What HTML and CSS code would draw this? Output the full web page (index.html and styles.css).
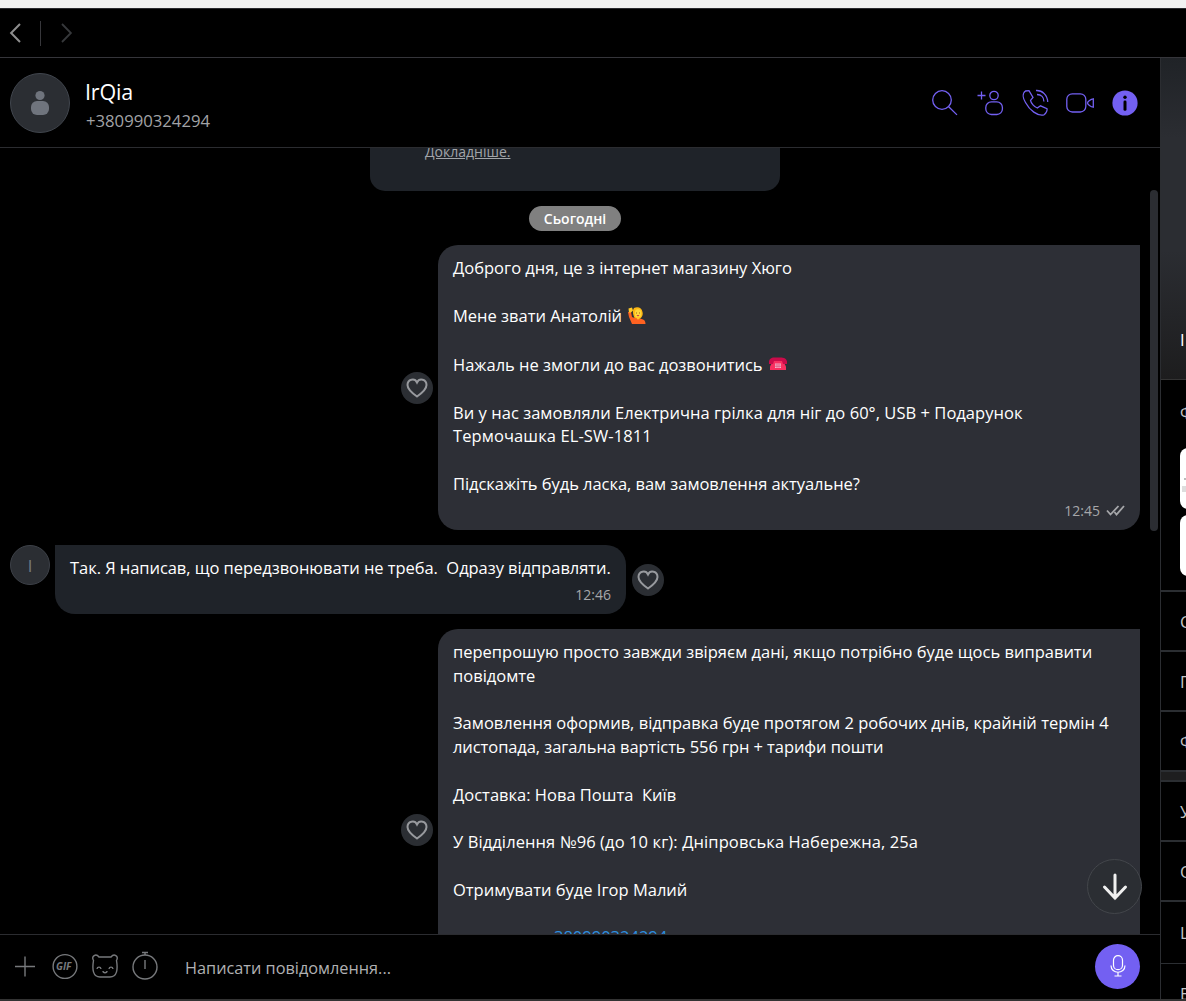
FILE: index.html
```
<!DOCTYPE html>
<html lang="uk">
<head>
    <meta charset="UTF-8">
    <meta name="viewport" content="width=device-width, initial-scale=1.0">
    <title>IrQia</title>
    <link rel="stylesheet" href="styles.css">
</head>
<body>

    <div class="titlebar"></div>

    <div class="nav-bar">
        <svg class="nav-back" width="12" height="20" viewBox="0 0 12 20"><path d="M11 1 2.1 10l8.9 9"/></svg>
        <div class="nav-divider"></div>
        <svg class="nav-forward" width="12" height="20" viewBox="0 0 12 20"><path d="M1 1l8.9 9L1 19"/></svg>
    </div>

    <div class="app">
        <div class="chat">
            <!-- Chat header -->
            <div class="chat-header">
                <div class="avatar">
                    <svg width="20" height="26" viewBox="0 0 20 26"><circle cx="10" cy="5.5" r="4.6"/><rect x="1" y="11" width="18" height="14" rx="6"/></svg>
                </div>
                <div class="contact">
                    <div class="contact-name">IrQia</div>
                    <div class="contact-phone">+380990324294</div>
                </div>
                <svg class="header-icons" width="208" height="30" viewBox="0 0 208 30">
                    <!-- search -->
                    <circle cx="12" cy="12" r="9.3"/>
                    <path d="M18.7 18.7l8.3 8.2"/>
                    <!-- add contact -->
                    <path d="M47.5 7.5h8M51.5 3.5v8"/>
                    <circle cx="64" cy="7.5" r="4.2"/>
                    <rect x="55.8" y="13.8" width="16.6" height="12.7" rx="5.6"/>
                    <!-- call -->
                    <path d="M95.5 3l3.500-.4 4 6.800-2.500 3c.6 3 3.700 6.500 6.800 7.600l3.200-2.200 6.500 2.900c.5 1.500-.8 4.700-3 6.100-6.500 1.600-14.500-4.700-18.500-12.300C93 10.500 92 5.500 95.500 3z"/>
                    <path d="M106 2.500c6.500-.4 11.500 4.800 11.700 11.500M107 6.500c4.200 0 6.900 3 6.900 7"/>
                    <!-- video -->
                    <rect x="136.8" y="5.8" width="19" height="18.2" rx="5.5"/>
                    <path d="M163.300 10.800v8.400c-2.500-.2-5.800-3-5.800-4.200s3.300-4 5.800-4.200z"/>
                    <!-- info -->
                    <circle class="info-disc" cx="195" cy="15" r="12.6"/>
                    <circle class="info-mark" cx="195" cy="9.3" r="1.7"/>
                    <rect class="info-mark" x="193.5" y="12.6" width="3" height="10.2" rx="1.3"/>
                </svg>
            </div>

            <!-- Messages -->
            <div class="messages">
                <div class="notice"><span class="notice-link">Докладніше.</span></div>
                <div class="date-pill">Сьогодні</div>

                <div class="row row-out">
                    <div class="like"><svg width="22" height="20" viewBox="0 0 22 20"><path d="M11 18.500C6 15 1.500 11.500 1.500 7c0-5.500 7-7.500 9.500-2.500C13.500-.5 20.500 1.500 20.500 7c0 4.500-4.500 8-9.500 11.500z"/></svg></div>
                    <div class="bubble bubble-out">
                        <div class="line"><span>Доброго дня, це з інтернет магазину Хюго</span></div>
                        <div class="line"></div>
                        <div class="line line-emoji"><span>Мене звати Анатолій</span>
                            <svg class="emoji" width="18" height="17" viewBox="0 0 18 17">
                                <path fill="#fdb813" d="M6 1c4-2 8 0 8.500 4 .8 3-.5 5-2.500 7H7C5 8 4 4 6 1z"/>
                                <ellipse cx="10" cy="6.5" rx="3.3" ry="4.3" fill="#ffd83a"/>
                                <path fill="#ff6221" d="M0 5h3l1 5c3 2 10 1 12 3 1 1 1.500 2.500 1.500 4H4L1 10z"/>
                                <path fill="#ffc928" d="M.5 1.500L4 .5l1 3-2 2H1zM8 10h4l-2 3z"/>
                                <path stroke="#8b4b16" stroke-width=".8" d="M8 6h1M11 6h1"/>
                                <path fill="#d33545" d="M8.500 8h3L10 9.500z"/>
                            </svg>
                        </div>
                        <div class="line"></div>
                        <div class="line line-emoji"><span>Нажаль не змогли до вас дозвонитись</span>
                            <svg class="emoji" width="18" height="14" viewBox="0 0 18 14">
                                <path fill="#f92f60" d="M4 4h10l3 5.500V13H1V9.500z"/>
                                <path fill="#ca0b4a" d="M0 4.500C1 0 4 .5 9 .5s8 0 9 4V7h-4L13 4H5L4 7H0z"/>
                                <path fill="#f9b5c8" d="M6 6.500h6V11H6z"/>
                                <path stroke="#d94b79" stroke-width=".6" d="M8 6.500V11M10 6.500V11M6 8h6M6 9.500h6"/>
                            </svg>
                        </div>
                        <div class="line"></div>
                        <div class="line line-wide"><span>Ви у нас замовляли Електрична грілка для ніг до 60°, USB + Подарунок</span></div>
                        <div class="line line-wider"><span>Термочашка EL-SW-1811</span></div>
                        <div class="line"></div>
                        <div class="line line-tight"><span>Підскажіть будь ласка, вам замовлення актуальне?</span></div>
                        <div class="time">12:45 <svg class="ticks" width="19" height="11" viewBox="0 0 19 11"><path d="M1 5.500l3.500 4L12.500 1M8.500 7l2 2.500L18 1"/></svg></div>
                    </div>
                </div>

                <div class="row row-in">
                    <div class="avatar-small">I</div>
                    <div class="bubble bubble-in">
                        <div class="line line-tight"><span>Так. Я написав, що передзвонювати не треба.&nbsp; Одразу відправляти.</span></div>
                        <div class="time">12:46</div>
                    </div>
                    <div class="like"><svg width="22" height="20" viewBox="0 0 22 20"><path d="M11 18.500C6 15 1.500 11.500 1.500 7c0-5.500 7-7.500 9.500-2.500C13.500-.5 20.500 1.500 20.500 7c0 4.500-4.500 8-9.500 11.500z"/></svg></div>
                </div>

                <div class="row row-out row-last">
                    <div class="like"><svg width="22" height="20" viewBox="0 0 22 20"><path d="M11 18.500C6 15 1.500 11.500 1.500 7c0-5.500 7-7.500 9.500-2.500C13.500-.5 20.500 1.500 20.500 7c0 4.500-4.500 8-9.500 11.500z"/></svg></div>
                    <div class="bubble bubble-out">
                        <div class="line"><span>перепрошую просто завжди звіряєм дані, якщо потрібно буде щось виправити</span></div>
                        <div class="line"><span>повідомте</span></div>
                        <div class="line"></div>
                        <div class="line"><span>Замовлення оформив, відправка буде протягом 2 робочих днів, крайній термін 4</span></div>
                        <div class="line line-tighter"><span>листопада, загальна вартість 556 грн + тарифи пошти</span></div>
                        <div class="line"></div>
                        <div class="line"><span>Доставка: Нова Пошта&nbsp; Київ</span></div>
                        <div class="line"></div>
                        <div class="line line-wider"><span>У Відділення №96 (до 10 кг): Дніпровська Набережна, 25а</span></div>
                        <div class="line"></div>
                        <div class="line"><span>Отримувати буде Ігор Малий</span></div>
                        <div class="line"></div>
                        <div class="line line-phone"><span class="phone-link">380990324294</span></div>
                    </div>
                </div>

                <div class="scrollbar"></div>
                <div class="scroll-down"><svg width="26" height="28" viewBox="0 0 26 28"><path d="M13 2v23M2.500 14L13 25l10.500-11"/></svg></div>
            </div>

            <!-- Message input -->
            <div class="composer">
                <svg class="tools" width="160" height="30" viewBox="0 0 160 30">
                    <path d="M15 16.500h20M25 6.500v20"/>
                    <circle cx="65" cy="16.5" r="11.9"/>
                    <text x="56" y="20.1">GIF</text>
                    <path d="M99 7h12c3-4 8-1 5.500 3.500 1.500 9 .5 16.500-6.500 16.500h-10c-7 0-8-7.500-6.500-16.500C91 6 96 3 99 7z"/>
                    <path d="M97 19c.4-2.500 3.600-2.500 4 0M109 19c.4-2.500 3.600-2.500 4 0M103 21c0 2.300 4 2.300 4 0"/>
                    <circle cx="145" cy="17" r="12"/>
                    <path d="M142 2.500h6M145 3v2M145 10v9"/>
                </svg>
                <div class="placeholder">Написати повідомлення...</div>
                <div class="mic">
                    <svg width="16" height="22" viewBox="0 0 16 22"><rect x="3.5" y=".7" width="9" height="14" rx="4.5"/><path d="M1 10.500c0 9 14 9 14 0M8 17.300V21M4.500 21h7"/></svg>
                </div>
            </div>
        </div>

        <!-- Info panel -->
        <div class="side">
            <div class="side-photo">I</div>
            <div class="side-media">
                <div class="side-media-title">Фото</div>
                <div class="thumb thumb-first"></div>
                <div class="thumb"></div>
            </div>
            <div class="side-item">С</div>
            <div class="side-item">П</div>
            <div class="side-item">Ф</div>
            <div class="side-gap"></div>
            <div class="side-item">У</div>
            <div class="side-item">О</div>
            <div class="side-item side-item-tall">Ц</div>
            <div class="side-item">В</div>
        </div>
    </div>
    <div class="bottom-edge"></div>

</body>
</html>
```
FILE: styles.css
```
* {
    box-sizing: border-box;
}

body {
    margin: 0;
    height: 1001px;
    overflow: hidden;
    display: flex;
    flex-direction: column;
    background: #000;
    color: #fff;
    font-family: 'Open Sans', 'Noto Sans', sans-serif;
    font-size: 16.5px;
}

svg {
    display: block;
    fill: none;
    flex-shrink: 0;
}

.titlebar {
    height: 9px;
    flex-shrink: 0;
    background: #f2f2f2;
    border-bottom: 1px solid #2b2b30;
}

.nav-bar {
    height: 49px;
    flex-shrink: 0;
    display: flex;
    align-items: center;
    padding-left: 9px;
    border-bottom: 1px solid #35353a;
}

.nav-back {
    stroke: #8e8e8e;
    stroke-width: 2;
}

.nav-forward {
    stroke: #36383b;
    stroke-width: 1.8;
}

.nav-divider {
    width: 1px;
    height: 25px;
    margin: 0 20px 0 19px;
    background: #37373b;
}

.app {
    height: 941px;
    display: flex;
}

.chat {
    width: 1160px;
    flex-shrink: 0;
    display: flex;
    flex-direction: column;
}

/* Header */
.chat-header {
    height: 90px;
    flex-shrink: 0;
    display: flex;
    align-items: center;
    padding: 0 20px 0 10px;
    border-bottom: 1px solid #2b2c30;
}

.avatar {
    width: 60px;
    height: 60px;
    display: flex;
    align-items: center;
    justify-content: center;
    background: #2b2e33;
    border: 1px solid #41464e;
    border-radius: 50%;
}

.avatar svg {
    fill: #6f747d;
}

.contact {
    flex: 1;
    padding: 6px 0 0 15px;
}

.contact-name {
    font-size: 21.5px;
    line-height: 30px;
    letter-spacing: -0.2px;
}

.contact-phone {
    padding-left: 1px;
    font-size: 16.7px;
    line-height: 27px;
    color: #a2a3a6;
}

.header-icons {
    stroke: #7360f2;
    stroke-width: 1.3;
    margin-right: 2px;
}

.info-disc {
    fill: #7360f2;
    stroke: none;
}

.info-mark {
    fill: #000;
    stroke: none;
}

/* Messages */
.messages {
    position: relative;
    flex: 1;
    min-height: 0;
    overflow: hidden;
}

.notice {
    width: 410px;
    height: 42.5px;
    margin-left: 370px;
    padding-left: 55px;
    background: #1f2329;
    border-radius: 0 0 15px 15px;
    font-size: 14px;
    line-height: 8px;
    color: #a2a5a9;
}

.notice-link {
    text-decoration: underline;
}

.date-pill {
    width: 92px;
    height: 25px;
    margin: 15px 0 14.5px 529px;
    border-radius: 13px;
    background: #808080;
    font-size: 14px;
    font-weight: 600;
    line-height: 26px;
    text-align: center;
}

.row {
    display: flex;
    align-items: center;
    margin-bottom: 15px;
}

.row-out {
    padding-left: 401px;
}

.row-in {
    padding-left: 10px;
}

.row-last {
    height: 402px;
}

.bubble {
    padding: 11px 15px 0;
}

.bubble-out {
    width: 702px;
    height: 285px;
    margin-left: 5px;
    background: #2d2f36;
    border-radius: 20px 0 20px 20px;
}

.row-last .bubble-out {
    height: 402px;
}

.bubble-in {
    width: 571px;
    height: 69px;
    margin: 0 6px 0 5px;
    background: #1f2329;
    border-radius: 0 20px 20px 20px;
}

.line {
    display: flex;
    align-items: center;
    height: 23.75px;
    line-height: 23.75px;
    white-space: nowrap;
}

.line-emoji {
    height: 24.8px;
}

.line-tight {
    letter-spacing: -0.05px;
}

.line-tighter {
    letter-spacing: -0.08px;
}

.line-wide {
    letter-spacing: 0.04px;
}

.line-wider {
    letter-spacing: 0.1px;
}

.emoji {
    margin-left: 6px;
}

.line-phone {
    padding-left: 101px;
}

.phone-link {
    color: #2d8fe0;
}

.time {
    display: flex;
    align-items: center;
    justify-content: flex-end;
    height: 30px;
    font-size: 14px;
    color: #a6a7aa;
}

.ticks {
    margin-left: 6px;
    stroke: #a6a7aa;
    stroke-width: 1.8;
}

.like {
    width: 32px;
    height: 32px;
    flex-shrink: 0;
    display: flex;
    align-items: center;
    justify-content: center;
    background: #2b2e33;
    border-radius: 50%;
}

.like svg {
    stroke: #989a9e;
    stroke-width: 2;
}

.avatar-small {
    width: 40px;
    height: 40px;
    align-self: flex-start;
    border: 1px solid #3d4148;
    border-radius: 50%;
    background: #2b2e33;
    color: #777c84;
    line-height: 40px;
    text-align: center;
}

.scrollbar {
    position: absolute;
    top: 42px;
    right: 2px;
    width: 8px;
    height: 341px;
    border-radius: 4px;
    background: #2b2d32;
}

.scroll-down {
    position: absolute;
    right: 18px;
    bottom: 20px;
    width: 55px;
    height: 55px;
    display: flex;
    align-items: center;
    justify-content: center;
    background: #2b2e33;
    border: 1px solid #43464b;
    border-radius: 50%;
}

.scroll-down svg {
    stroke: #f0f0f0;
    stroke-width: 3;
    stroke-linecap: round;
}

/* Composer */
.composer {
    height: 65px;
    flex-shrink: 0;
    display: flex;
    align-items: center;
    padding: 0 20px 2px 0;
    border-top: 1px solid #2b2c30;
}

.tools {
    margin-bottom: 2px;
    stroke: #77797c;
    stroke-width: 1.4;
}

.tools text {
    fill: #77797c;
    stroke: none;
    font-size: 10px;
    font-weight: 700;
    font-style: italic;
}

.placeholder {
    flex: 1;
    padding: 3px 0 0 25px;
    font-size: 16.3px;
    color: #b0b1b3;
}

.mic {
    width: 45px;
    height: 45px;
    display: flex;
    align-items: center;
    justify-content: center;
    background: #7360f2;
    border-radius: 50%;
}

.mic svg {
    stroke: #fff;
    stroke-width: 1.2;
}

/* Info panel */
.side {
    width: 26px;
    flex-shrink: 0;
    overflow: hidden;
    border-left: 1px solid #2b2d31;
    color: #c4c5c7;
}

.side-photo {
    height: 322px;
    padding: 270px 0 0 19px;
    background: linear-gradient(#202327, #2b2d32 25%, #2b2d32 60%, #1d1d1e);
    border-bottom: 1px solid #333;
    color: #fff;
}

.side-media {
    height: 212px;
    padding: 21px 0 0 19px;
    border-bottom: 2px solid #2b2e32;
}

.side-media-title {
    height: 47px;
}

.thumb {
    width: 60px;
    height: 61px;
    margin-bottom: 6px;
    border-radius: 8px;
    background: #fff;
}

.thumb-first {
    background: linear-gradient(#bbb, #bbb) 4px 30px / 3px 2px no-repeat,
        linear-gradient(#ddd, #ddd) 2px 38px / 4px 6px no-repeat, #fff;
}

.side-item {
    height: 60px;
    padding-left: 19px;
    border-bottom: 2px solid #2b2e32;
    line-height: 60px;
}

.side-item-tall {
    height: 62px;
    line-height: 62px;
    border-bottom-width: 1px;
}

.side-gap {
    height: 10px;
    background: #1e1e1f;
    border-bottom: 2px solid #2b2e32;
}

.bottom-edge {
    height: 2px;
    background: #333;
}
```
